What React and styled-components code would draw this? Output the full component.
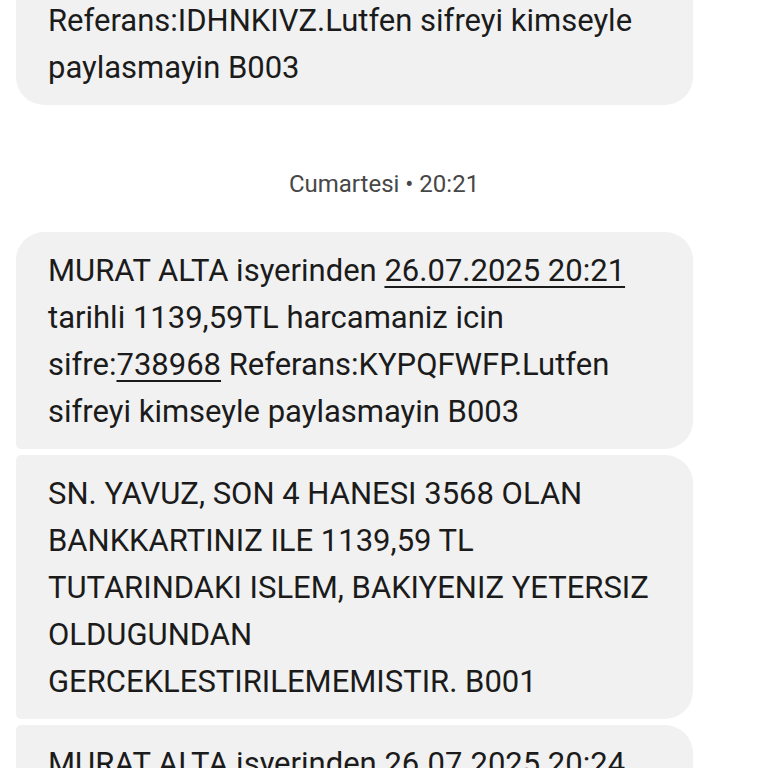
import React from "react";
import styled, { createGlobalStyle } from "styled-components";

const Global = createGlobalStyle`
  html, body { margin: 0; padding: 0; background: #ffffff; overflow: hidden; }
  body { font-family: Roboto, "Noto Sans", "Liberation Sans", sans-serif; }
`;

const Screen = styled.div`
  width: 768px;
  height: 768px;
  overflow: hidden;
  background: #ffffff;
`;

const Feed = styled.div`
  display: flex;
  flex-direction: column;
  margin-top: -65px;
`;

const Bubble = styled.div`
  box-sizing: border-box;
  width: 677px;
  margin-left: 16px;
  background: #f1f1f1;
  color: #1b1b1b;
  font-size: 31px;
  line-height: 47px;
  padding: 14.5px 32px;
  white-space: nowrap;
  border-radius: ${(p) => (p.$first ? "28px" : "5px")} 28px 28px
    ${(p) => (p.$last ? "28px" : "5px")};
  margin-top: ${(p) => (p.$first ? "0" : "6px")};
`;

const Link = styled.span`
  text-decoration: underline;
  text-decoration-thickness: 2px;
  text-underline-offset: 5px;
`;

const DateLabel = styled.div`
  text-align: center;
  color: #474747;
  font-size: 24px;
  line-height: 24px;
  margin: 67px 0 36px;
`;

export default function App() {
  return (
    <Screen>
      <Global />
      <Feed>
        <Bubble $first $last>
          &nbsp;
          <br />
          Referans:IDHNKIVZ.Lutfen sifreyi kimseyle
          <br />
          paylasmayin B003
        </Bubble>
        <DateLabel>Cumartesi • 20:21</DateLabel>
        <Bubble $first>
          MURAT ALTA isyerinden <Link>26.07.2025 20:21</Link>
          <br />
          tarihli 1139,59TL harcamaniz icin
          <br />
          sifre:<Link>738968</Link> Referans:KYPQFWFP.Lutfen
          <br />
          sifreyi kimseyle paylasmayin B003
        </Bubble>
        <Bubble>
          SN. YAVUZ, SON 4 HANESI 3568 OLAN
          <br />
          BANKKARTINIZ ILE 1139,59 TL
          <br />
          TUTARINDAKI ISLEM, BAKIYENIZ YETERSIZ
          <br />
          OLDUGUNDAN
          <br />
          GERCEKLESTIRILEMEMISTIR. B001
        </Bubble>
        <Bubble>
          MURAT ALTA isyerinden <Link>26.07.2025 20:24</Link>
          <br />
          tarihli 1139,59TL harcamaniz icin
        </Bubble>
      </Feed>
    </Screen>
  );
}
